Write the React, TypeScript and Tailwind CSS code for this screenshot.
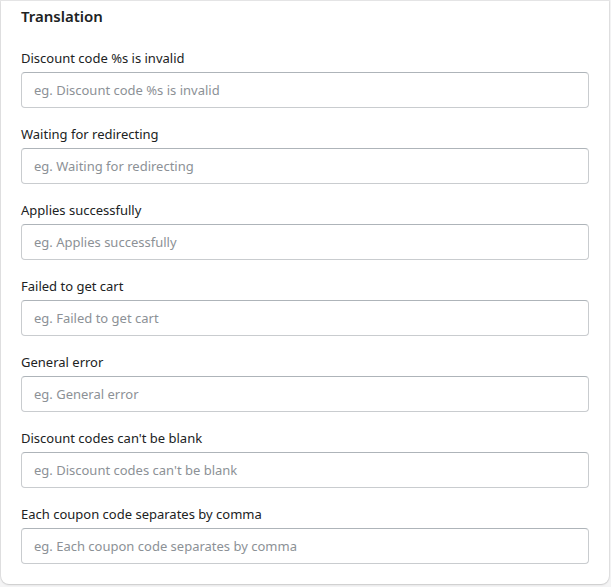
const fields = [
  'Discount code %s is invalid',
  'Waiting for redirecting',
  'Applies successfully',
  'Failed to get cart',
  'General error',
  "Discount codes can't be blank",
  'Each coupon code separates by comma',
];

export default function App() {
  return (
    <div
      className="min-h-[587px] w-[611px] bg-[#f4f4f5] pl-px pr-[2px] pt-px pb-[3px]"
      style={{ fontFamily: '"Segoe UI", "Noto Sans", "Open Sans", sans-serif' }}
    >
      <div className="rounded-b-lg bg-white px-5 pt-[5px] pb-5 shadow-[0_0_0_1px_rgba(0,0,0,0.06),0_1px_2px_rgba(0,0,0,0.12)]">
        <h2 className="text-[15px] font-semibold leading-5 text-[#202223]">Translation</h2>
        <div className="mt-[22px] flex flex-col gap-4">
          {fields.map((label) => (
            <div key={label}>
              <label className="block text-[13px] leading-5 text-[#202223]">{label}</label>
              <input
                type="text"
                placeholder={`eg. ${label}`}
                className="mt-1 block h-9 w-full rounded border border-[#c9cccf] border-t-[#aeb4b9] bg-white px-3 text-[13px] text-[#202223] placeholder:text-[#8c9196] focus:outline-none"
              />
            </div>
          ))}
        </div>
      </div>
    </div>
  );
}
